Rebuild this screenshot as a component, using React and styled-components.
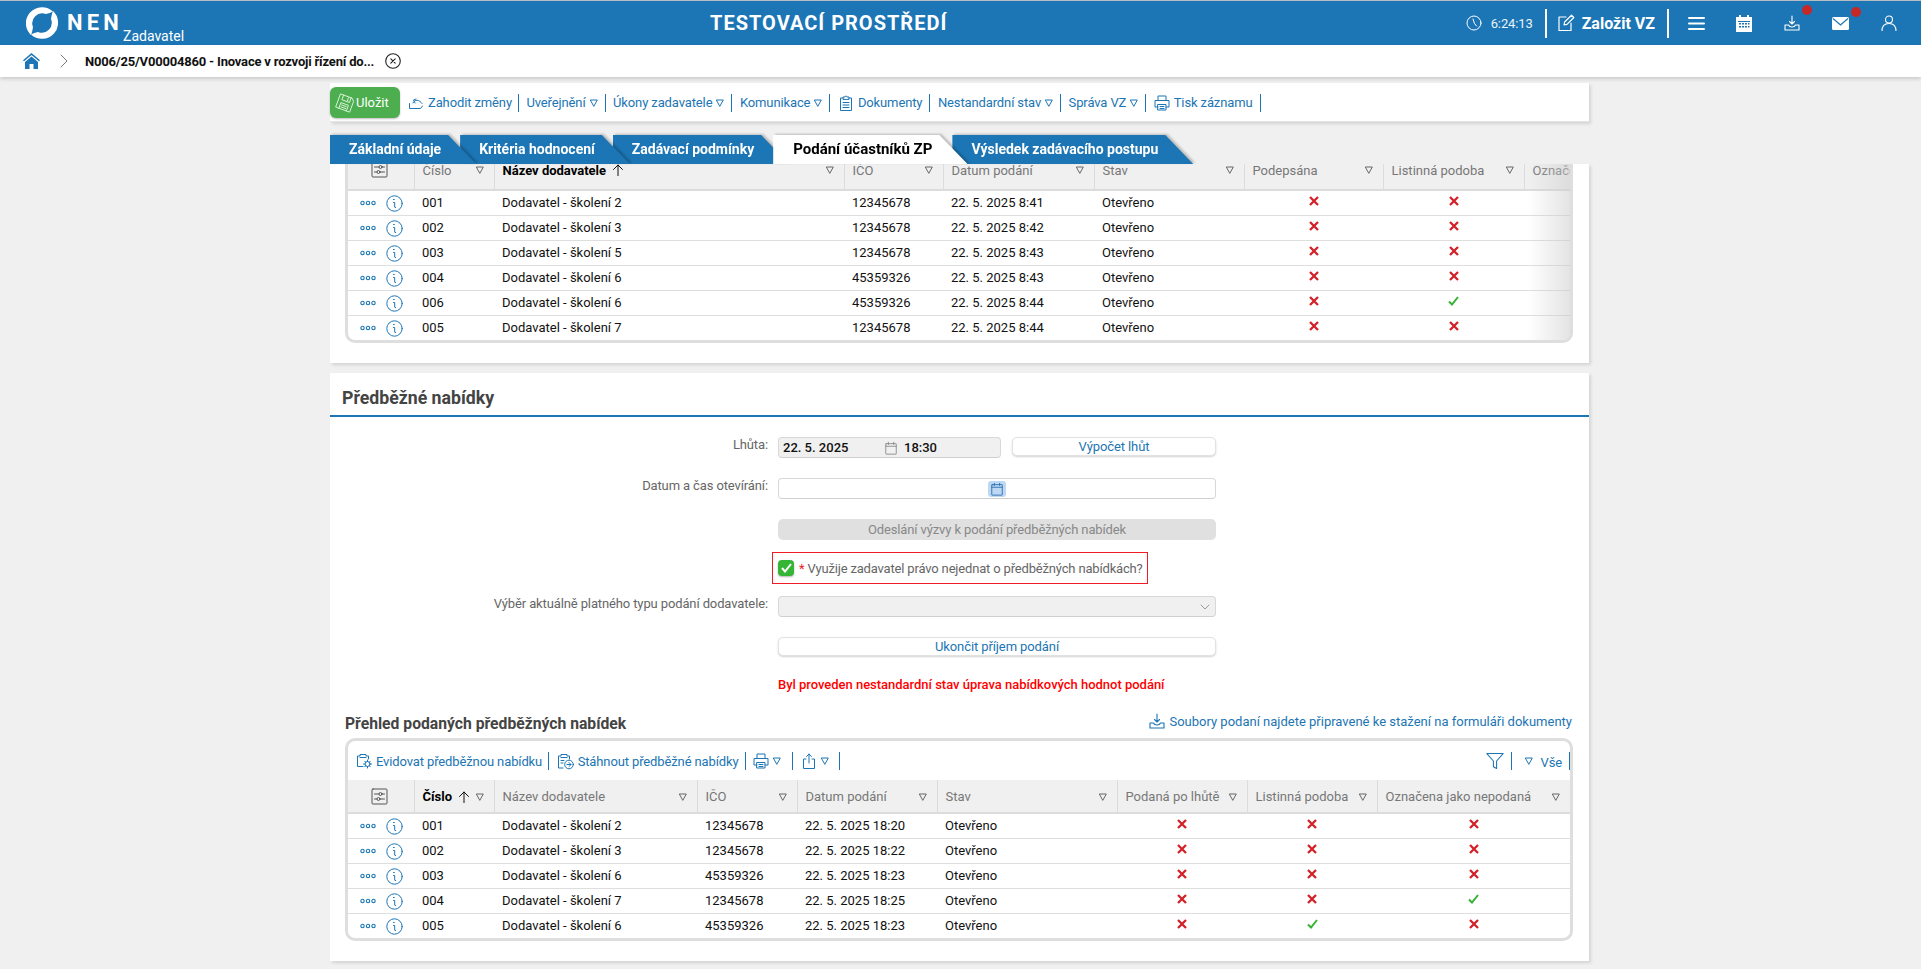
import React from "react";
import styled, { createGlobalStyle } from "styled-components";

const BLUE = "#1c75b4";
const Global = createGlobalStyle`
  html, body { margin: 0; padding: 0; background: #f0f0f0; }
  body { font-family: Roboto, "Liberation Sans", sans-serif; font-size: 13px; color: #111; }
  * { box-sizing: border-box; }
`;

const Page = styled.div`height: 969px; overflow: hidden; background: #f0f0f0;`;
const TopBar = styled.header`
  height: 45px; background: ${BLUE}; border-top: 1px solid #b5bcc2; display: flex; align-items: center; color: #fff; position: relative;
`;
const LogoArea = styled.div`width: 710px; padding-left: 26px; display: flex; align-items: flex-start; height: 100%; padding-top: 6px;`;
const NenText = styled.span`font-weight: 700; font-size: 22px; letter-spacing: 4.2px; margin-left: 9px; margin-top: 5px; line-height: 22px;`;
const Role = styled.span`font-size: 14px; margin-top: 21px; line-height: 16px;`;
const Title = styled.div`font-size: 20px; font-weight: 700; letter-spacing: 1px; width: 300px;`;
const TopRight = styled.div`margin-left: auto; display: flex; align-items: center; height: 100%; padding-right: 24px;`;
const Clock = styled.span`font-size: 13px; margin-left: 9px; width: 42px; color: #eaf3f9; letter-spacing: -.1px;`;
const VSep = styled.span`width: 2px; height: 29px; background: #fff; margin: 0 ${p => p.$r ?? 12}px 0 12px;`;
const CreateBtn = styled.span`font-size: 16px; font-weight: 700; margin-left: 7px;`;
const IconSlot = styled.span`position: relative; display: inline-flex; margin-left: ${p => p.$gap}px;`;
const Dot = styled.span`position: absolute; width: 10px; height: 10px; border-radius: 50%; background: #c62828; top: -10px; right: -12px;`;

const SubBar = styled.nav`
  height: 32px; background: #fff; display: flex; align-items: center; padding-left: 23px; box-shadow: 0 2px 4px rgba(0,0,0,.16); position: relative; z-index: 5;
`;
const Crumb = styled.span`font-weight: 700; font-size: 13px; letter-spacing: -.19px; color: #111; margin-left: 16px; width: 288px; white-space: nowrap;`;

const Main = styled.main`width: 1259px; margin-left: 330px; padding-top: 6px;`;
const ActionBar = styled.div`
  height: 39px; background: #fff; display: flex; align-items: center; padding-top: 1px; box-shadow: 2px 2px 3px rgba(0,0,0,.12); border-bottom: 1px solid #e4e4e4;
`;
const SaveBtn = styled.button`
  width: 70px; height: 31px; border: 0; border-radius: 6px; background: #4cae4f; color: #fff; font: 13px Roboto, sans-serif; display: flex; align-items: center; padding: 0 0 0 5px; gap: 1px; margin-right: 8px; box-shadow: 0 1px 2px rgba(0,0,0,.25);
`;
const ActionItem = styled.span`
  display: inline-flex; align-items: center; gap: 4px; color: ${BLUE}; font-size: 13px; letter-spacing: -.12px; height: 18px; padding-right: ${p => p.$pr ?? 7}px; margin-right: ${p => p.$mr ?? 7.5}px; border-right: 1px solid ${BLUE}; white-space: nowrap;
`;
const Tabs = styled.div`display: flex; height: 29px; margin-top: 13px; position: relative; z-index: 3;`;
const Tab = styled.div`
  position: relative; height: 29px; padding: 0 ${p => p.$pr}px 0 ${p => p.$pl ?? 19}px; margin-right: ${p => p.$mr}px; font-weight: 700; font-size: ${p => p.$active ? 15 : 14}px; line-height: 29px; white-space: nowrap; color: ${p => p.$active ? "#000" : "#fff"}; z-index: ${p => p.$z}; filter: drop-shadow(2px -1px 1px rgba(0,0,0,.22));
  &::before { content: ""; position: absolute; inset: 0; background: ${p => p.$active ? "#fff" : BLUE}; clip-path: polygon(0 0, calc(100% - 28px) 0, 100% 100%, 0 100%); }
  & > span { position: relative; }
`;
const Panel = styled.section`
  background: #fff; box-shadow: 2px 2px 3px rgba(0,0,0,.12); padding: ${p => p.$pad};
  margin-top: ${p => p.$mt ?? 0}px;
`;
const TableFrame = styled.div`
  position: relative; overflow: hidden; width: 1228px; border: 3px solid #dedede; border-top-width: ${p => p.$flat ? 0 : 3}px; border-radius: ${p => p.$flat ? "0 0 10px 10px" : "10px"}; background: #fff;
`;
const Fade = styled.div`position: absolute; right: 0; top: 0; bottom: 0; width: 42px; background: linear-gradient(to right, rgba(220,220,220,0), rgba(205,205,205,.55)); pointer-events: none;`;
const Grid = styled.table`
  border-collapse: collapse; table-layout: fixed; width: ${p => p.$w}px; margin-top: ${p => p.$top ?? 0}px;
`;
const Th = styled.th`
  height: ${p => p.$h}px; background: #f0f0f0; color: ${p => p.$sorted ? "#000" : "#777"}; font-weight: ${p => p.$sorted ? 700 : 400}; font-size: 13px; text-align: left; padding: 0 10px 0 8px; border-right: 1px solid #dcdcdc; border-bottom: 2px solid #dcdcdc; white-space: nowrap; overflow: hidden;
`;
const ThInner = styled.div`display: flex; align-items: center; justify-content: space-between; padding-top: 1px;`;
const ThLabel = styled.span`display: inline-flex; align-items: center; gap: 6px;`;
const ThIcon = styled.div`display: flex; justify-content: center;`;
const Td = styled.td`
  height: 25px; padding: 1px 8px 0; font-size: 13px; color: #111; border-bottom: 1px solid #dedede; white-space: nowrap; text-align: ${p => p.$center ? "center" : "left"}; line-height: 14px;
  tr:last-child & { border-bottom: 0; }
`;
const RowTools = styled.div`display: flex; align-items: center; gap: 10px; padding-left: 4px;`;
const Mark = styled.span`display: inline-flex; transform: translateY(-1px);`;
const BreadcrumbIcon = styled.span`display: inline-flex; margin-left: ${p => p.$gap}px;`;

const SectionTitle = styled.h2`
  margin: 0; height: 44px; padding: 14px 0 0 12px; font-size: 17.7px; line-height: 22px; font-weight: 700; color: #444; border-bottom: 2px solid ${BLUE};
`;
const Form = styled.div`display: grid; grid-template-columns: 438px 438px; column-gap: 10px; padding-top: 20px;`;
const Label = styled.label`text-align: right; color: #666; font-size: 13px; letter-spacing: -.12px; line-height: 16px; white-space: nowrap;`;
const Field = styled.div`display: flex; gap: 11px; align-items: flex-start;`;
const Input = styled.div`
  height: 21px; flex: ${p => p.$grow ?? 1}; border: 1px solid #d8d8d8; border-bottom-color: #cfcfcf; border-radius: 4px; background: ${p => p.$off ? "#f0f0f0" : "#fff"}; display: flex; align-items: center; position: relative; font-size: 13px; font-weight: 500; color: #111; padding-left: ${p => p.$flush ? 0 : 4}px;
`;
const InputGap = styled.span`width: ${p => p.$w}px; display: inline-flex; align-items: center;`;
const CalFocus = styled.span`display: flex; margin: 0 auto; background: #bcd8f2; border-radius: 3px; padding: 1px 2px;`;
const SelectArrow = styled.span`margin-left: auto; margin-right: 5px; display: flex;`;
const PlainBtn = styled.button`
  height: 19px; flex: 1; border: 1px solid #e2e2e2; border-radius: 5px; background: #fff; color: ${BLUE}; font: 13px Roboto, sans-serif; letter-spacing: -.1px; box-shadow: 0 1px 2px rgba(0,0,0,.18); padding: 0;
`;
const DisabledBtn = styled.button`
  height: 21px; width: 100%; border: 0; border-radius: 5px; background: #e0e0e0; color: #888; font: 13px Roboto, sans-serif; letter-spacing: -.12px; padding: 0;
`;
const FormRow = styled.div`display: contents;`;
const Spacer = styled.div`grid-column: 1 / -1; height: ${p => p.$h}px;`;
const ConsentRow = styled.div`grid-column: 1 / -1; padding-left: 442px;`;
const Consent = styled.div`
  width: 376px; height: 32px; border: 1px solid #ee1c25; display: flex; align-items: center; padding-left: 5px; color: #666; font-size: 13px; letter-spacing: -.17px; white-space: nowrap;
`;
const Tick = styled.span`
  flex: none; width: 16px; height: 16px; border-radius: 4px; background: #35b536; display: inline-flex; align-items: center; justify-content: center; margin-right: 5px; box-shadow: 0 1px 2px rgba(0,0,0,.3);
`;
const Star = styled.span`color: #e22; margin-right: 3px;`;
const ErrorText = styled.div`color: #f00; font-weight: 500; font-size: 13px; letter-spacing: -.02px; line-height: 16px;`;
const OverviewWrap = styled.div`padding: 0 15px;`;
const OverviewHead = styled.div`display: flex; justify-content: space-between; align-items: center; height: 20px; margin-top: 20px; padding: 0 2px 0 0; margin-bottom: 5px;`;
const OverviewTitle = styled.h3`margin: 0; font-size: 15.7px; font-weight: 700; color: #444;`;
const DocLink = styled.span`display: inline-flex; align-items: center; gap: 4px; color: ${BLUE}; font-size: 13px; margin-bottom: 4px;`;
const GridBar = styled.div`height: 39px; display: flex; align-items: center; padding-left: 8px; padding-top: 1px;`;
const GridBarEnd = styled.div`margin-left: auto; display: flex; align-items: center;`;
const AllLabel = styled.span`margin-left: 3px; transform: translateY(1px);`;

const Svg = ({ s = 16, vb = "0 0 16 16", c = BLUE, w = 1, children, ...r }) => (
  <svg width={s} height={s} viewBox={vb} fill="none" stroke={c} strokeWidth={w} strokeLinecap="round" strokeLinejoin="round" {...r}>{children}</svg>
);
const LOGO_D = "M27 4.500A16 16 0 0 0 5 28C6 26 6.500 23 7 20A10 10 0 0 1 20 7C22.500 6.500 25 5.500 27 4.500Z";
const Logo = () => (
  <svg width="32" height="32" viewBox="0 0 32 32" fill="#fff">
    <path d={LOGO_D} />
    <path d={LOGO_D} transform="rotate(180 16 16)" />
  </svg>
);
const ClockI = () => <Svg s={16} c="#fff"><circle cx="8" cy="8" r="7" /><path d="M7 4l1.500 4.500L10.500 11" /></Svg>;
const PenI = () => <Svg s={18} vb="0 0 18 18" c="#fff" w={1.2}><path d="M9 3H2v13.500h12V9" /><path d="M7 11l.6-3L14.500 1.200l2.300 2.300L10 10.400z" /></Svg>;
const BurgerI = () => <Svg s={17} vb="0 0 17 17" c="#fff" w={2}><path d="M1 3h15M1 8.500h15M1 14h15" /></Svg>;
const CalI = () => <svg width="16" height="17" viewBox="0 0 16 17" fill="#fff"><path d="M3 0h2v2h6V0h2v2h3v15H0V2h3z" /><g fill={BLUE}><rect x="2" y="6" width="12" height="1" /><rect x="3" y="8" width="2" height="1.500" /><rect x="6" y="8" width="2" height="1.500" /><rect x="9" y="8" width="2" height="1.500" /><rect x="12" y="8" width="1.500" height="1.500" /><rect x="3" y="11" width="2" height="1.500" /><rect x="6" y="11" width="2" height="1.500" /><rect x="9" y="11" width="2" height="1.500" /><rect x="12" y="11" width="1.500" height="1.500" /></g></svg>;
const TrayI = ({ c = "#fff", s = 16 }) => <Svg s={s} c={c} w={1.1}><path d="M8 1v8M5.500 6.500L8 9l2.500-2.500" /><path d="M1 10h3.500c.5 1.500 1.500 2 3.500 2s3-.5 3.500-2H15v5H1z" /></Svg>;
const MailI = () => <svg width="17" height="13" viewBox="0 0 17 13"><rect width="17" height="13" rx="1.500" fill="#fff" /><path d="M1 1.500l7.500 6.500L16 1.500" fill="none" stroke={BLUE} strokeWidth="1.200" /></svg>;
const UserI = () => <Svg s={16} c="#fff" w={1.1}><circle cx="8" cy="4.500" r="3.500" /><path d="M1 16c0-5 3-7.500 7-7.500s7 2.500 7 7.500" /></Svg>;
const HomeI = () => <svg width="17" height="16" viewBox="0 0 17 16" fill={BLUE}><path d="M8.500 0L17 7.200l-1 1.100-7.500-6.300L1 8.300 0 7.200z" /><path d="M8.500 3.500L15 9v7h-4.500v-5h-4v5H2V9z" /></svg>;
const Chev = () => <BreadcrumbIcon $gap={19}><Svg s={10} height={14} vb="0 0 10 14" c="#777"><path d="M2 1l6 6-6 6" /></Svg></BreadcrumbIcon>;
const CloseI = () => <BreadcrumbIcon $gap={12}><Svg s={16} c="#222" w={1.1}><circle cx="8" cy="8" r="7.300" /><path d="M5.800 5.800l4.400 4.400M10.200 5.800l-4.400 4.400" /></Svg></BreadcrumbIcon>;
const SaveI = () => <Svg s={20} vb="0 0 20 20" c="#d9f2d9" w={0.9}><g transform="rotate(20 10 10)"><path d="M3 3h12l2.500 2.500V17H3z" /><path d="M6 3v5h8V3M11.500 4v3M6 17v-6h8v6M7.500 13h5M7.500 15h5" /></g></Svg>;
const UndoI = () => <Svg s={16} w={1}><path d="M1.500 8.500V13.500h11l2-2.500" /><path d="M5 8c2-4 6-3.500 9 .5" /><path d="M8 4l-2.500 1L7 8" /></Svg>;
const TriI = ({ c = BLUE }) => <Svg s={8} vb="0 0 8 8" c={c} w={1}><path d="M.7 1h6.600L4 7z" /></Svg>;
const DocI = () => <Svg s={16} w={1}><path d="M5 3H2.500v12.500h11V3H11" /><path d="M5 4V2h2c0-1.300 2-1.300 2 0h2v2zM5 7.500h6M5 10h6M5 12.500h6" /></Svg>;
const PrintI = () => <Svg s={16} w={1}><path d="M4 5V1h8v4M4 12H1V5.500h14V12h-3" /><path d="M4 9.500h8v5.500H4zM6 11.500h4M6 13.500h4" /></Svg>;
const ClipGearI = () => <Svg s={16} w={1}><path d="M7 13.500H1.500V3H4V1.500h6V3h2.500v3" /><path d="M4 4.500h6" /><circle cx="11.500" cy="11" r="2.500" /><path d="M11.500 7v1.500M11.500 13.500V15M7.500 11H9M14 11h1.500M8.700 8.200l1 1M13.300 12.800l1 1M14.300 8.200l-1 1M9.700 12.800l-1 1" /></Svg>;
const ClipDlI = () => <Svg s={17} vb="0 0 17 17" w={1}><path d="M6 15H1.500V3H4V1.500h6V3h2.500v3" /><path d="M4 4.500h6M4 7.500h3M4 10h2" /><circle cx="12" cy="11.500" r="4.300" /><path d="M10 11.500h4M12 9.500l2 2-2 2" /></Svg>;
const ShareI = () => <Svg s={16} w={1}><path d="M5 6H2.500v9.500h11V6H11" /><path d="M8 10V1M5.500 3.500L8 1l2.500 2.500" /></Svg>;
const FunnelI = () => <Svg s={18} vb="0 0 17 17" w={1}><path d="M.8 1.500h15.400L10 8.500v7l-3-1.500V8.500z" /></Svg>;
const SmallCal = ({ c = "#888", s = 14 }) => <Svg s={s} c={c} w={1}><rect x="2" y="3" width="12" height="12" rx=".5" /><path d="M2 6h12M5 1.500V4M11 1.500V4" /></Svg>;
const ChevDown = () => <Svg s={10} vb="0 0 10 10" c="#999"><path d="M1 3l4 4 4-4" /></Svg>;
const Sliders = () => <Svg s={17} vb="0 0 17 17" c="#555" w={1}><rect x="1" y="1" width="15" height="15" rx="1" /><path d="M3.500 6h4.500M11 6h2.500M3.500 11H6M9 11h4.500" /><circle cx="9.500" cy="6" r="1.500" /><circle cx="7.500" cy="11" r="1.500" /></Svg>;
const Dots = () => <svg width="16" height="6" viewBox="0 0 16 6" fill="none" stroke={BLUE} strokeWidth="1.100"><circle cx="2.500" cy="3" r="1.700" /><circle cx="8" cy="3" r="1.700" /><circle cx="13.500" cy="3" r="1.700" /></svg>;
const InfoI = () => <Svg s={17} vb="0 0 17 17" w={1}><circle cx="8.500" cy="8.500" r="7.700" /><path d="M7.500 4.500h.8M7.500 7.500h1.200v4.500c0 .6.500.8 1 .6" /></Svg>;
const Cross = () => <Mark><svg width="10" height="10" viewBox="0 0 10 10" stroke="#d32128" strokeWidth="2.300"><path d="M1 1l8 8M9 1l-8 8" /></svg></Mark>;
const Check = () => <Mark><svg width="11" height="10" viewBox="0 0 11 10" fill="none" stroke="#34b233" strokeWidth="2"><path d="M1 5.500l3 3L10 1" /></svg></Mark>;
const Up = () => <Svg s={12} vb="0 0 12 12" c="#111" w={1}><path d="M6 12V1M1.500 5.500L6 1l4.500 4.500" /></Svg>;

const Flag = ({ v }) => (v ? <Check /> : <Cross />);
const Tools = () => <RowTools><Dots /><InfoI /></RowTools>;

const HeadCell = ({ h, label, sorted, arrow }) => (
  <Th $h={h} $sorted={sorted}>
    <ThInner>
      <ThLabel>{label}{arrow && <Up />}</ThLabel>
      <TriI c="#666" />
    </ThInner>
  </Th>
);

const suppliers = [
  ["001", "Dodavatel - školení 2", "12345678", "22. 5. 2025 8:41", 0, 0],
  ["002", "Dodavatel - školení 3", "12345678", "22. 5. 2025 8:42", 0, 0],
  ["003", "Dodavatel - školení 5", "12345678", "22. 5. 2025 8:43", 0, 0],
  ["004", "Dodavatel - školení 6", "45359326", "22. 5. 2025 8:43", 0, 0],
  ["006", "Dodavatel - školení 6", "45359326", "22. 5. 2025 8:44", 0, 1],
  ["005", "Dodavatel - školení 7", "12345678", "22. 5. 2025 8:44", 0, 0],
];
const offers = [
  ["001", "Dodavatel - školení 2", "12345678", "22. 5. 2025 18:20", 0, 0, 0],
  ["002", "Dodavatel - školení 3", "12345678", "22. 5. 2025 18:22", 0, 0, 0],
  ["003", "Dodavatel - školení 6", "45359326", "22. 5. 2025 18:23", 0, 0, 0],
  ["004", "Dodavatel - školení 7", "12345678", "22. 5. 2025 18:25", 0, 0, 1],
  ["005", "Dodavatel - školení 6", "45359326", "22. 5. 2025 18:23", 0, 1, 0],
];
const Cols = ({ w }) => <colgroup>{w.map((x, i) => <col key={i} width={x} />)}</colgroup>;

export default function App() {
  return (
    <Page>
      <Global />
      <TopBar>
        <LogoArea>
          <Logo />
          <NenText>NEN</NenText>
          <Role>Zadavatel</Role>
        </LogoArea>
        <Title>TESTOVACÍ PROSTŘEDÍ</Title>
        <TopRight>
          <ClockI />
          <Clock>6:24:13</Clock>
          <VSep $r={10} />
          <PenI />
          <CreateBtn>Založit VZ</CreateBtn>
          <VSep />
          <IconSlot $gap={7}><BurgerI /></IconSlot>
          <IconSlot $gap={31}><CalI /></IconSlot>
          <IconSlot $gap={32}><TrayI /><Dot /></IconSlot>
          <IconSlot $gap={32}><MailI /><Dot /></IconSlot>
          <IconSlot $gap={32}><UserI /></IconSlot>
        </TopRight>
      </TopBar>
      <SubBar>
        <HomeI />
        <Chev />
        <Crumb>N006/25/V00004860 - Inovace v rozvoji řízení do...</Crumb>
        <CloseI />
      </SubBar>
      <Main>
        <ActionBar>
          <SaveBtn><SaveI />Uložit</SaveBtn>
          <ActionItem $pr={6}><UndoI />Zahodit změny</ActionItem>
          <ActionItem>Uveřejnění <TriI /></ActionItem>
          <ActionItem>Úkony zadavatele <TriI /></ActionItem>
          <ActionItem>Komunikace <TriI /></ActionItem>
          <ActionItem><DocI />Dokumenty</ActionItem>
          <ActionItem>Nestandardní stav <TriI /></ActionItem>
          <ActionItem>Správa VZ <TriI /></ActionItem>
          <ActionItem><PrintI />Tisk záznamu</ActionItem>
        </ActionBar>
        <Tabs>
          <Tab $pr={35} $mr={-16} $z={5}><span>Základní údaje</span></Tab>
          <Tab $pr={35} $mr={-17} $z={4}><span>Kritéria hodnocení</span></Tab>
          <Tab $pr={35} $mr={-16} $z={3}><span>Zadávací podmínky</span></Tab>
          <Tab $pr={35} $pl={20} $mr={-15} $z={6} $active><span>Podání účastníků ZP</span></Tab>
          <Tab $pr={35} $mr={0} $z={2}><span>Výsledek zadávacího postupu</span></Tab>
        </Tabs>
        <Panel $pad="0 15px 20px 15px">
          <TableFrame $flat>
            <Grid $w={1400} $top={-14}>
              <Cols w={[66, 80, 350, 99, 151, 150, 139, 141, 224]} />
              <thead>
                <tr>
                  <Th $h={40}><ThIcon><Sliders /></ThIcon></Th>
                  <HeadCell h={40} label="Číslo" />
                  <HeadCell h={40} label="Název dodavatele" sorted arrow />
                  <HeadCell h={40} label="IČO" />
                  <HeadCell h={40} label="Datum podání" />
                  <HeadCell h={40} label="Stav" />
                  <HeadCell h={40} label="Podepsána" />
                  <HeadCell h={40} label="Listinná podoba" />
                  <HeadCell h={40} label="Označena" />
                </tr>
              </thead>
              <tbody>
                {suppliers.map((r, i) => (
                  <tr key={i}>
                    <Td><Tools /></Td>
                    <Td>{r[0]}</Td>
                    <Td>{r[1]}</Td>
                    <Td>{r[2]}</Td>
                    <Td>{r[3]}</Td>
                    <Td>Otevřeno</Td>
                    <Td $center><Flag v={r[4]} /></Td>
                    <Td $center><Flag v={r[5]} /></Td>
                    <Td />
                  </tr>
                ))}
              </tbody>
            </Grid>
            <Fade />
          </TableFrame>
        </Panel>
        <Panel $mt={10} $pad="0 0 20px 0">
          <SectionTitle>Předběžné nabídky</SectionTitle>
          <Form>
            <FormRow>
              <Label>Lhůta:</Label>
              <Field>
                <Input $off $grow="0 0 223px">
                  <InputGap $w={101}>22. 5. 2025</InputGap>
                  <InputGap $w={20}><SmallCal /></InputGap>
                  18:30
                </Input>
                <PlainBtn>Výpočet lhůt</PlainBtn>
              </Field>
            </FormRow>
            <Spacer $h={20} />
            <FormRow>
              <Label>Datum a čas otevírání:</Label>
              <Field><Input $flush><CalFocus><SmallCal c="#2b6cb0" /></CalFocus></Input></Field>
            </FormRow>
            <Spacer $h={20} />
            <FormRow>
              <div />
              <Field><DisabledBtn>Odeslání výzvy k podání předběžných nabídek</DisabledBtn></Field>
            </FormRow>
            <Spacer $h={12} />
            <ConsentRow>
              <Consent>
                <Tick><svg width="11" height="10" viewBox="0 0 11 10" fill="none" stroke="#fff" strokeWidth="2"><path d="M1 5l3 3.500L10 1" /></svg></Tick>
                <Star>*</Star>Využije zadavatel právo nejednat o předběžných nabídkách?
              </Consent>
            </ConsentRow>
            <Spacer $h={12} />
            <FormRow>
              <Label>Výběr aktuálně platného typu podání dodavatele:</Label>
              <Field><Input $off><SelectArrow><ChevDown /></SelectArrow></Input></Field>
            </FormRow>
            <Spacer $h={20} />
            <FormRow>
              <div />
              <Field><PlainBtn>Ukončit příjem podání</PlainBtn></Field>
            </FormRow>
            <Spacer $h={21} />
            <FormRow>
              <div />
              <ErrorText>Byl proveden nestandardní stav úprava nabídkových hodnot podání</ErrorText>
            </FormRow>
          </Form>
          <OverviewWrap>
            <OverviewHead>
              <OverviewTitle>Přehled podaných předběžných nabídek</OverviewTitle>
              <DocLink><TrayI c={BLUE} />Soubory podaní najdete připravené ke stažení na formuláři dokumenty</DocLink>
            </OverviewHead>
            <TableFrame>
              <GridBar>
                <ActionItem $pr={6}><ClipGearI />Evidovat předběžnou nabídku</ActionItem>
                <ActionItem $pr={6}><ClipDlI />Stáhnout předběžné nabídky</ActionItem>
                <ActionItem $pr={11}><PrintI /><TriI /></ActionItem>
                <ActionItem $pr={10}><ShareI /><TriI /></ActionItem>
                <GridBarEnd>
                  <ActionItem $pr={7} $mr={13}><FunnelI /></ActionItem>
                  <ActionItem $mr={0} $pr={7}><TriI /><AllLabel>Vše</AllLabel></ActionItem>
                </GridBarEnd>
              </GridBar>
              <Grid $w={1222}>
                <Cols w={[66, 80, 203, 100, 140, 180, 130, 130, 193]} />
                <thead>
                  <tr>
                    <Th $h={33}><ThIcon><Sliders /></ThIcon></Th>
                    <HeadCell h={33} label="Číslo" sorted arrow />
                    <HeadCell h={33} label="Název dodavatele" />
                    <HeadCell h={33} label="IČO" />
                    <HeadCell h={33} label="Datum podání" />
                    <HeadCell h={33} label="Stav" />
                    <HeadCell h={33} label="Podaná po lhůtě" />
                    <HeadCell h={33} label="Listinná podoba" />
                    <HeadCell h={33} label="Označena jako nepodaná" />
                  </tr>
                </thead>
                <tbody>
                  {offers.map((r, i) => (
                    <tr key={i}>
                      <Td><Tools /></Td>
                      <Td>{r[0]}</Td>
                      <Td>{r[1]}</Td>
                      <Td>{r[2]}</Td>
                      <Td>{r[3]}</Td>
                      <Td>Otevřeno</Td>
                      <Td $center><Flag v={r[4]} /></Td>
                      <Td $center><Flag v={r[5]} /></Td>
                      <Td $center><Flag v={r[6]} /></Td>
                    </tr>
                  ))}
                </tbody>
              </Grid>
            </TableFrame>
          </OverviewWrap>
        </Panel>
      </Main>
    </Page>
  );
}
